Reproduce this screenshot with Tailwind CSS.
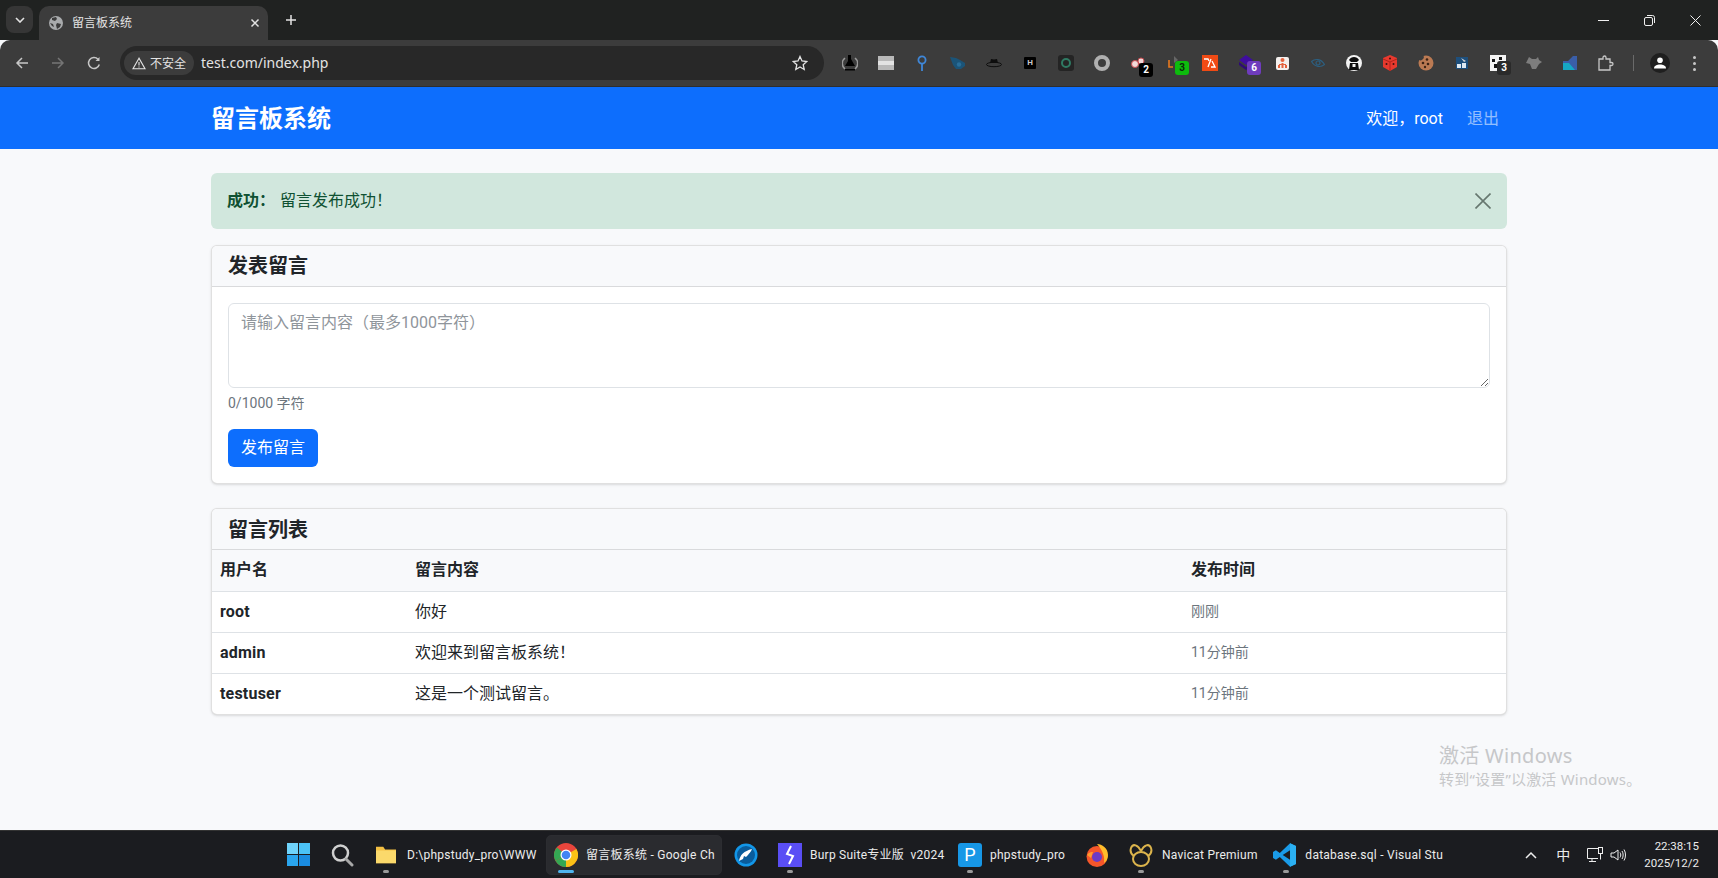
<!DOCTYPE html>
<html lang="zh-CN">
<head>
  <meta charset="UTF-8">
  <title>留言板系统</title>
  <script src="https://cdn.jsdelivr.net/npm/@tailwindcss/browser@4"></script>
</head>
<body class="bg-[#f8f9fb] font-['Roboto','Noto_Sans_CJK_SC',sans-serif] text-[#212529]">
<div class="relative flex h-[878px] w-[1718px] flex-col overflow-hidden">

  <!-- Tab strip -->
  <div class="flex h-10 shrink-0 items-end bg-[#202221]">
    <div class="mb-[7px] ml-[6px] flex h-[27px] w-[27px] items-center justify-center rounded-lg bg-[#363636]">
      <svg width="10" height="6" viewBox="0 0 10 6" fill="none" stroke="#e3e3e3" stroke-width="1.6"><path d="M1 1l4 4 4-4"/></svg>
    </div>
    <div class="ml-[6px] flex h-[34px] w-[229px] items-center rounded-t-[10px] bg-[#3c3c3c] pl-[9px] pr-[8px]">
      <svg width="16" height="16" viewBox="0 0 16 16"><circle cx="8" cy="8" r="7" fill="#a9abad"/><path d="M4 3l4-1 1 2-2 2-3-1zM9 8l4 1-1 3-3 2-1-4zM2 8l3 1 1 3-2-1z" fill="#3c3c3c"/></svg>
      <span class="ml-[8px] flex-1 text-[12px] text-[#e3e3e3]">留言板系统</span>
      <svg width="10" height="10" viewBox="0 0 10 10" stroke="#e3e3e3" stroke-width="1.5"><path d="M1.5 1.5l7 7M8.5 1.5l-7 7"/></svg>
    </div>
    <div class="mb-[14px] ml-[17px] flex h-[12px] w-[12px] items-center justify-center">
      <svg width="12" height="12" viewBox="0 0 12 12" stroke="#e3e3e3" stroke-width="1.5"><path d="M6 1v10M1 6h10"/></svg>
    </div>
    <div class="mb-[7px] ml-auto flex items-center">
      <div class="flex h-[26px] w-[46px] items-center justify-center">
        <svg width="11" height="11" viewBox="0 0 11 11" stroke="#f0f0f0"><path d="M0 5.5h11"/></svg>
      </div>
      <div class="flex h-[26px] w-[46px] items-center justify-center">
        <svg width="11" height="11" viewBox="0 0 11 11" fill="none" stroke="#f0f0f0"><rect x="0.5" y="2.5" width="8" height="8" rx="1.5"/><path d="M3 .5h5.5a2 2 0 0 1 2 2V8"/></svg>
      </div>
      <div class="flex h-[26px] w-[46px] items-center justify-center">
        <svg width="11" height="11" viewBox="0 0 11 11" stroke="#f0f0f0"><path d="M.5.5l10 10M10.5.5l-10 10"/></svg>
      </div>
    </div>
  </div>

  <!-- Toolbar -->
  <div class="flex h-[47px] shrink-0 items-center rounded-t-[10px] border-b border-[#2e2e2e] bg-[#3c3c3c]">
    <div class="flex w-[120px] shrink-0 items-center pl-[4px]">
      <div class="flex w-9 justify-center">
        <svg width="14" height="14" viewBox="0 0 14 14" fill="none" stroke="#c7c7c7" stroke-width="1.5"><path d="M13 7H2M7 2L2 7l5 5"/></svg>
      </div>
      <div class="flex w-9 justify-center">
        <svg width="14" height="14" viewBox="0 0 14 14" fill="none" stroke="#757575" stroke-width="1.5"><path d="M1 7h11M7 2l5 5-5 5"/></svg>
      </div>
      <div class="flex w-9 justify-center">
        <svg width="14" height="14" viewBox="0 0 14 14" fill="none" stroke="#c7c7c7" stroke-width="1.5"><path d="M12.3 8.5A5.5 5.5 0 1 1 11 3.2"/><path d="M12.5 1v4h-4" fill="#c7c7c7" stroke="none"/></svg>
      </div>
    </div>
    <div class="flex h-[34px] w-[704px] shrink-0 items-center rounded-full bg-[#282828] pl-[4px] pr-[16px]">
      <div class="flex h-[24px] w-[70px] items-center justify-center gap-[4px] rounded-full bg-[#3c3c3c]">
        <svg width="14" height="13" viewBox="0 0 14 13" fill="none" stroke="#e3e3e3" stroke-width="1.1"><path d="M7 1.2L1 11.800h12zM7 5v3.500M7 9.500v1"/></svg>
        <span class="pt-px text-[12px] text-[#e3e3e3]">不安全</span>
      </div>
      <span class="ml-[7px] flex-1 pb-[2px] font-['Noto_Sans'] text-[14px] text-[#e3e3e3]">test.com/index.php</span>
      <svg width="16" height="16" viewBox="0 0 16 16" fill="none" stroke="#e3e3e3" stroke-width="1.3"><path d="M8 1.5l2 4.500 4.800.5-3.600 3.200 1 4.800L8 12l-4.200 2.500 1-4.800L1.200 6.500 6 6z"/></svg>
    </div>
    <div class="ml-2 flex items-center">
      <div class="flex w-9 justify-center"><svg width="16" height="16" viewBox="0 0 16 16"><path d="M3 3a7 7 0 0 0 0 11M13 3a7 7 0 0 1 0 11" fill="none" stroke="#9a9a9a" stroke-width="1.5"/><path d="M6 0h3v4l4 7H3l3-5z" fill="#000"/><path d="M3 14h10v1.500H3z" fill="#000"/></svg></div>
      <div class="flex w-9 justify-center"><svg width="16" height="14" viewBox="0 0 16 14"><path d="M0 0h16v5H0z" fill="#b9b9b9"/><path d="M0 5h16v4H0z" fill="#e3e3e3"/><path d="M0 9h16v5H0z" fill="#b9b9b9"/></svg></div>
      <div class="flex w-9 justify-center"><svg width="10" height="16" viewBox="0 0 10 16" fill="none" stroke="#3f87d8" stroke-width="1.8"><circle cx="5" cy="5" r="3.600"/><path d="M5 9v7"/></svg></div>
      <div class="flex w-9 justify-center"><svg width="16" height="14" viewBox="0 0 16 14"><path d="M0 1l6 1 4 2 5 3v3l-4 3H6L3 9z" fill="#1b5478"/><circle cx="9" cy="8.500" r="2.200" fill="#2a6e99"/></svg></div>
      <div class="flex w-9 justify-center"><svg width="16" height="10" viewBox="0 0 16 10" fill="none"><path d="M4 5l1-4 3 .6L11 1l1 4z" fill="#0d0d0d"/><ellipse cx="8" cy="6.500" rx="7.500" ry="2.200" stroke="#0d0d0d"/></svg></div>
      <div class="flex w-9 justify-center"><div class="flex h-3 w-3 items-center justify-center rounded-[1px] bg-black text-[8px] font-bold leading-none text-[#c9c9c9]">H</div></div>
      <div class="flex w-9 justify-center"><div class="flex h-4 w-4 items-center justify-center rounded-[3px] bg-[#242424]"><div class="h-[10px] w-[10px] rounded-full border-2 border-[#2f7a63]"></div></div></div>
      <div class="flex w-9 justify-center"><div class="h-4 w-4 rounded-full border-[4px] border-[#b0b0b0]"></div></div>
      <div class="relative flex w-9 justify-center">
        <svg width="16" height="12" viewBox="0 0 16 12"><circle cx="5" cy="7" r="3.500" fill="#f2dada" stroke="#c9494d"/><circle cx="11" cy="4" r="3" fill="#f2dada" stroke="#c9494d"/></svg>
        <span class="absolute left-[19px] top-[6px] flex h-[14px] w-[14px] items-center justify-center rounded-[3px] bg-black text-[10px] font-bold leading-none text-white">2</span>
      </div>
      <div class="relative flex w-9 justify-center">
        <svg width="16" height="16" viewBox="0 0 16 16" fill="none"><path d="M3 5v7h4" stroke="#e8791f" stroke-width="1.6"/><path d="M8 1l4 4-4 3z" fill="#666"/></svg>
        <span class="absolute left-[19px] top-[6px] flex h-[14px] w-[14px] items-center justify-center rounded-[3px] bg-[#0dbb0d] text-[10px] font-bold leading-none text-[#0a2a0a]">3</span>
      </div>
      <div class="flex w-9 justify-center"><div class="flex h-4 w-4 items-center justify-center bg-[#f04a14]"><svg width="12" height="10" viewBox="0 0 12 10" fill="none" stroke="#fff" stroke-width="1.3"><path d="M0 1h4l1 2M7 1L4 9M8 3l3 6H7"/></svg></div></div>
      <div class="relative flex w-9 justify-center">
        <svg width="16" height="16" viewBox="0 0 16 16"><path d="M8 0l7 5-7 5-7-5z" fill="#3f0d9e"/><path d="M1 7l7 5 7-5v3l-7 5-7-5z" fill="#2e0a77"/></svg>
        <span class="absolute left-[19px] top-[6px] flex h-[14px] w-[14px] items-center justify-center rounded-[3px] bg-[#6f3cbd] text-[10px] font-bold leading-none text-white">6</span>
      </div>
      <div class="flex w-9 justify-center"><div class="flex h-[13px] w-[13px] items-center justify-center rounded-[2px] bg-[#f4f0ee]"><svg width="11" height="11" viewBox="0 0 11 11" fill="#e4633f"><circle cx="5.500" cy="2" r="2"/><path d="M1 7h2v3H1zM4.500 5h2v5h-2zM8 7h2v3H8zM2 6h7v1H2z"/></svg></div></div>
      <div class="flex w-9 justify-center"><svg width="14" height="10" viewBox="0 0 14 10" fill="none" stroke="#2c5f80" stroke-width="1.2"><path d="M.5 3.500C4 .5 10 .5 13.500 6.500 10 9.500 4 9.500.5 3.500z"/><circle cx="7" cy="5" r="2"/></svg></div>
      <div class="flex w-9 justify-center"><svg width="16" height="16" viewBox="0 0 16 16"><circle cx="8" cy="8" r="8" fill="#f2f2f2"/><path d="M3 5c2-4 8-4 10 0l-2 2H5zM4 8h8l1 7H3z" fill="#0c0c0c"/><path d="M6.500 9h3v3h-3z" fill="#f2f2f2"/></svg></div>
      <div class="flex w-9 justify-center"><svg width="16" height="16" viewBox="0 0 16 16"><path d="M8 0l7 3v9l-7 4-7-4V3z" fill="#e8392e"/><path d="M1 4l7 3 7-3M8 7v9" stroke="#b5231b" fill="none"/><circle cx="8" cy="3.500" r="1" fill="#3c1210"/><circle cx="4.500" cy="9" r="1" fill="#3c1210"/><circle cx="11.500" cy="9" r="1" fill="#3c1210"/></svg></div>
      <div class="flex w-9 justify-center"><svg width="16" height="16" viewBox="0 0 16 16"><circle cx="8" cy="8" r="7.500" fill="#bb7a53"/><circle cx="9" cy="4.500" r="1.300" fill="#3d2416"/><circle cx="5" cy="8" r="1.300" fill="#3d2416"/><circle cx="10" cy="9" r="1.300" fill="#3d2416"/><circle cx="7" cy="12" r="1.200" fill="#3d2416"/><path d="M0 0h5a3 3 0 0 1-5 4z" fill="#3c3c3c"/></svg></div>
      <div class="flex w-9 justify-center"><svg width="12" height="12" viewBox="0 0 12 12"><path d="M0 0h12v12H0z" fill="#1e4f7c"/><path d="M1 7h4v4H1zM6 6h4v5H6z" fill="#dfe9f2"/><path d="M5 1l5 3-2 1z" fill="#d6d6d6"/></svg></div>
      <div class="relative flex w-9 justify-center">
        <svg width="16" height="16" viewBox="0 0 16 16"><path d="M0 0h16v16H0z" fill="#f4f4f4"/><path d="M2 4h3v3H2zM9 2h3v3H9zM4 9h4v4H4zM10 8h3v2h-3z" fill="#151515"/></svg>
        <span class="absolute left-[17px] top-[6px] flex h-[14px] w-[14px] items-center justify-center rounded-[3px] bg-[#2a2a2a] text-[10px] font-bold leading-none text-white">3</span>
      </div>
      <div class="flex w-9 justify-center"><svg width="16" height="14" viewBox="0 0 16 14"><path d="M3 1l3 2h4l2-2 1 3 3 2-3 2-3 5H6L4 8 0 7z" fill="#7d7d7d"/></svg></div>
      <div class="flex w-9 justify-center"><svg width="14" height="14" viewBox="0 0 14 14"><path d="M0 14V5h5l5-5h4v14z" fill="#3a5ea8"/><path d="M0 14V7h6l6 7z" fill="#16a7c4"/></svg></div>
      <div class="flex w-9 justify-center"><svg width="16" height="16" viewBox="0 0 16 16" fill="none" stroke="#c7c7c7" stroke-width="1.3"><path d="M1 4h4V2.500a1.500 1.500 0 0 1 3 0V4h4v3.500h1.500a1.500 1.500 0 0 1 0 3H12V15H1z"/></svg></div>
    </div>
    <div class="ml-[9px] h-4 w-px bg-[#6a6a6a]"></div>
    <div class="ml-[16px] flex h-5 w-5 items-center justify-center rounded-full bg-[#1f1f1f]">
      <svg width="12" height="12" viewBox="0 0 12 12" fill="#fff"><circle cx="6" cy="3.200" r="2.800"/><path d="M0 11.500c0-3 3-4 6-4s6 1 6 4z"/></svg>
    </div>
    <div class="ml-[23px] flex flex-col gap-[3px]">
      <div class="h-[3px] w-[3px] rounded-full bg-[#c7c7c7]"></div>
      <div class="h-[3px] w-[3px] rounded-full bg-[#c7c7c7]"></div>
      <div class="h-[3px] w-[3px] rounded-full bg-[#c7c7c7]"></div>
    </div>
  </div>

  <!-- Navbar -->
  <nav class="flex h-[62px] shrink-0 items-center bg-[#0d6efd] pt-px">
    <div class="mx-auto flex w-[1296px] items-center justify-between">
      <span class="text-[24px] font-bold leading-none text-white">留言板系统</span>
      <div class="flex items-center pr-[8px] text-[16px]">
        <span class="text-white">欢迎，root</span>
        <a class="ml-[24px] text-white/55">退出</a>
      </div>
    </div>
  </nav>

  <!-- Page -->
  <main class="min-h-0 flex-1 bg-[#f8f9fb]">
    <div class="mx-auto w-[1296px] pt-6">
      <div class="mb-4 flex h-[56px] items-center justify-between rounded-md bg-[#d1e7dd] pl-4 pr-4 text-[16px] text-[#0f5132]">
        <p><strong class="font-bold">成功：</strong><span class="ml-[5px]">留言发布成功！</span></p>
        <svg width="16" height="16" viewBox="0 0 16 16" stroke="#66776f" stroke-width="1.6"><path d="M.5.5l15 15M15.5.5l-15 15"/></svg>
      </div>

      <section class="mb-6 overflow-hidden rounded-md border border-black/12 bg-white shadow-sm">
        <h5 class="h-[41px] border-b border-black/12 bg-[#f8f9fb] px-4 text-[20px] font-bold leading-[40px]">发表留言</h5>
        <div class="p-4">
          <textarea rows="3" disabled class="block h-[85px] w-full resize-y rounded-md border border-[#dee2e6] bg-white px-3 py-[7px] text-[16px] placeholder:text-[#8f959b]" placeholder="请输入留言内容（最多1000字符）"></textarea>
          <p class="mt-[5px] text-[14px] leading-[21px] text-[#6c757d]">0/1000 字符</p>
          <button class="mt-[15px] block h-[38px] w-[90px] rounded-md bg-[#0d6efd] text-[16px] text-white">发布留言</button>
        </div>
      </section>

      <section class="overflow-hidden rounded-md border border-black/12 bg-white shadow-sm">
        <h5 class="h-[41px] border-b border-black/12 bg-[#f8f9fb] px-4 text-[20px] font-bold leading-[42px]">留言列表</h5>
        <table class="w-full table-fixed border-collapse text-[16px]">
          <thead>
            <tr class="h-[41px] border-b border-[#dee2e6] bg-[#f8f9fb] text-left">
              <th class="w-[195px] pl-2 font-semibold">用户名</th>
              <th class="w-[776px] pl-2 font-semibold">留言内容</th>
              <th class="pl-2 font-semibold">发布时间</th>
            </tr>
          </thead>
          <tbody>
            <tr class="h-[41px] border-b border-[#dee2e6]">
              <td class="pl-2 font-bold tracking-[0.2px]">root</td>
              <td class="pl-2">你好</td>
              <td class="pl-2 text-[14px] text-[#6c757d]">刚刚</td>
            </tr>
            <tr class="h-[41px] border-b border-[#dee2e6]">
              <td class="pl-2 font-bold tracking-[0.2px]">admin</td>
              <td class="pl-2">欢迎来到留言板系统！</td>
              <td class="pl-2 text-[14px] text-[#6c757d]">11分钟前</td>
            </tr>
            <tr class="h-[41px]">
              <td class="pl-2 font-bold tracking-[0.2px]">testuser</td>
              <td class="pl-2">这是一个测试留言。</td>
              <td class="pl-2 text-[14px] text-[#6c757d]">11分钟前</td>
            </tr>
          </tbody>
        </table>
      </section>
    </div>
  </main>

  <!-- Windows activation watermark -->
  <div class="absolute left-[1439px] top-[743px] font-['Noto_Sans','Noto_Sans_CJK_SC',sans-serif] text-[#c6c7c9]">
    <p class="text-[20px] leading-[26px] tracking-[0.3px]">激活 Windows</p>
    <p class="text-[15px] leading-[20px] tracking-[0.2px]">转到“设置”以激活 Windows。</p>
  </div>

  <!-- Taskbar -->
  <div class="flex h-[48px] shrink-0 items-center border-t border-[#333] bg-[#1b1c20] pl-[278px] text-[12px] tracking-[0.25px] text-[#ececec]">
    <div class="flex w-[40px] justify-center">
      <div class="grid h-[23px] w-[23px] grid-cols-2 gap-[1px]">
        <div class="bg-[#6fd3fb]"></div><div class="bg-[#4bc2f7]"></div><div class="bg-[#2aa5ee]"></div><div class="bg-[#1a8be0]"></div>
      </div>
    </div>
    <div class="flex w-[47px] justify-center">
      <svg width="24" height="24" viewBox="0 0 24 24" fill="none" stroke="#cfcfcf"><circle cx="10.5" cy="10" r="7.5" stroke-width="2.5"/><path d="M16 16l6 6" stroke="#a8a8a8" stroke-width="3" stroke-linecap="round"/></svg>
    </div>
    <div class="relative flex h-10 w-[177px] items-center pl-[10px]">
      <svg width="22" height="20" viewBox="0 0 24 22"><path d="M1 2h8l2 3h12v15H1z" fill="#f4c043"/><path d="M1 6h22v14H1z" fill="#fbd96b"/></svg>
      <span class="ml-[10px] whitespace-nowrap">D:\phpstudy_pro\WWW</span>
      <div class="absolute bottom-[2px] left-[18px] h-[3px] w-[6px] rounded-full bg-[#9a9a9a]"></div>
    </div>
    <div class="relative ml-1 flex h-10 w-[176px] items-center rounded-[5px] border border-[#2c2d31] bg-[#2a2b2f] pl-[7px]">
      <svg width="24" height="24" viewBox="0 0 24 24"><circle cx="12" cy="12" r="12" fill="#e8453c"/><path d="M12 12L1.600 18A12 12 0 0 1 3 4.500z" fill="#34a853"/><path d="M12 12l10.400-6A12 12 0 0 1 12 24z" fill="#fbc116"/><path d="M12 12L1.600 18A12 12 0 0 0 12 24z" fill="#34a853"/><circle cx="12" cy="12" r="5.500" fill="#fff"/><circle cx="12" cy="12" r="4.300" fill="#4285f4"/></svg>
      <span class="ml-[8px] whitespace-nowrap">留言板系统 - Google Ch</span>
      <div class="absolute bottom-[1px] left-[11px] h-[3px] w-[16px] rounded-full bg-[#4fb5ef]"></div>
    </div>
    <div class="flex w-[48px] justify-center">
      <svg width="24" height="24" viewBox="0 0 24 24"><circle cx="12" cy="12" r="11.500" fill="#1296e8"/><circle cx="12" cy="12" r="9" fill="#0a5c9c"/><path d="M5 18c1-6 5-10 13-12-1 3-3 4-4 6l-2 2-2-1-1 3z" fill="#fff"/></svg>
    </div>
    <div class="relative flex h-10 w-[180px] items-center pl-[8px]">
      <div class="flex h-6 w-6 items-center justify-center bg-[#5a4ef5]"><svg width="10" height="20" viewBox="0 0 10 20" fill="none" stroke="#fff" stroke-width="2"><path d="M6 1L2 9l6 2-4 8"/></svg></div>
      <span class="ml-[8px] whitespace-nowrap">Burp Suite专业版&nbsp; v2024</span>
      <div class="absolute bottom-[2px] left-[17px] h-[3px] w-[6px] rounded-full bg-[#9a9a9a]"></div>
    </div>
    <div class="relative flex h-10 w-[122px] items-center pl-[8px]">
      <div class="flex h-6 w-6 items-center justify-center rounded-[3px] bg-[#1797e6] text-[18px] leading-none text-white">P</div>
      <span class="ml-[8px] whitespace-nowrap">phpstudy_pro</span>
      <div class="absolute bottom-[2px] left-[17px] h-[3px] w-[6px] rounded-full bg-[#9a9a9a]"></div>
    </div>
    <div class="flex w-[50px] justify-center">
      <svg width="24" height="24" viewBox="0 0 24 24"><circle cx="12" cy="13.5" r="10.500" fill="#f5562a"/><path d="M12 1c5 0 11 4 11 11 0 3-1 6-4 8 1-6-1-12-7-19z" fill="#ffbc2b"/><circle cx="12" cy="14" r="5" fill="#6c3bc4"/><path d="M2 12c2-3 4-3 6-3l-2 6z" fill="#ff9b2e"/></svg>
    </div>
    <div class="relative flex h-10 w-[151px] items-center pl-[7px]">
      <svg width="24" height="24" viewBox="0 0 24 24" fill="none" stroke="#dcb44c" stroke-width="2"><path d="M12 8C9 2 4 0 2 5c-1 3 0 6 3 8M12 8c3-6 8-8 10-3 1 3 0 6-3 8"/><ellipse cx="12" cy="16" rx="8" ry="7"/></svg>
      <span class="ml-[9px] whitespace-nowrap">Navicat Premium</span>
      <div class="absolute bottom-[2px] left-[16px] h-[3px] w-[6px] rounded-full bg-[#9a9a9a]"></div>
    </div>
    <div class="relative flex h-10 w-[170px] items-center">
      <svg width="24" height="24" viewBox="0 0 24 24"><path d="M17.5 0L24 3v18l-6.500 3L7 14l-4 3-3-2v-6l3-2 4 3z" fill="#1a9be8"/><path d="M17.5 7L10 12l7.500 5z" fill="#1b1c20"/><path d="M17.5 0L24 3v18l-6.500 3z" fill="#2bb0f2"/></svg>
      <span class="ml-[9px] whitespace-nowrap">database.sql - Visual Stu</span>
      <div class="absolute bottom-[2px] left-[10px] h-[3px] w-[6px] rounded-full bg-[#9a9a9a]"></div>
    </div>
    <div class="ml-auto flex items-center pr-[19px] tracking-normal">
      <svg width="12" height="8" viewBox="0 0 12 8" fill="none" stroke="#eee" stroke-width="1.5"><path d="M1 7l5-5 5 5"/></svg>
      <span class="ml-[19px] text-[14px] leading-none">中</span>
      <svg class="ml-[17px]" width="17" height="16" viewBox="0 0 17 16" fill="none" stroke="#eee"><path d="M11 11.5H.5V1.500H11M5 11.5v3M2 14.500h7"/><rect x="11.5" y=".5" width="4" height="6"/><path d="M13.5 6.500v6"/></svg>
      <svg class="ml-[6px]" width="16" height="14" viewBox="0 0 16 14" fill="none" stroke="#eee"><path d="M1 5h3l4-3v10L4 9H1zM10 4.500c1 1.500 1 3.500 0 5M12 3c1.500 2 1.500 6 0 8M14 1.500c2 3 2 8 0 11"/></svg>
      <div class="ml-[18px] text-right text-[11.5px] leading-[17px]">
        <p>22:38:15</p>
        <p>2025/12/2</p>
      </div>
    </div>
  </div>
</div>
</body>
</html>
